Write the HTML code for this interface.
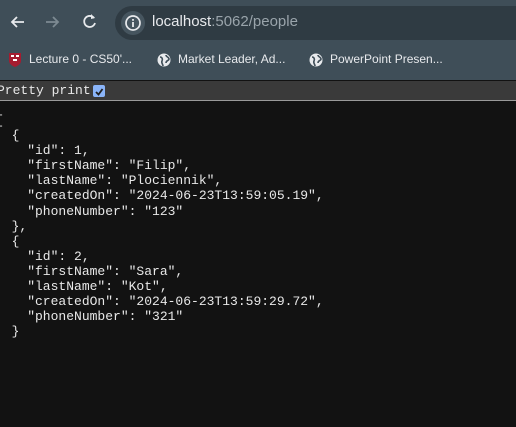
<!DOCTYPE html>
<html><head><style>
html,body{margin:0;padding:0;width:516px;height:427px;overflow:hidden;background:#121212;font-family:"Liberation Sans",sans-serif;}
.top{position:absolute;left:0;top:0;width:516px;height:80px;background:#3f4e58;}
.addr{position:absolute;left:115px;top:6px;width:420px;height:34px;border-radius:17px;background:#2f3b43;}
.info{position:absolute;left:121px;top:11px;width:24px;height:24px;border-radius:12px;background:#46555f;}
.url{position:absolute;left:152px;top:13px;font-size:15px;color:#e8eaed;}
.url span{color:#9aa4ab;}
.bm{position:absolute;top:52px;font-size:12px;color:#e8eaed;}
.pp{position:absolute;left:0;top:81px;width:516px;height:19px;background:#3a3a3a;border-bottom:1px solid #9a9a9a;}
.pp span{position:absolute;left:-3px;top:2px;font-family:"Liberation Mono",monospace;font-size:13px;color:#e8e8e8;}
.cb{position:absolute;left:93px;top:85px;width:12px;height:12px;border-radius:2px;background:#8ab4f8;}
pre{position:absolute;left:-4px;top:113px;margin:0;font-family:"Liberation Mono",monospace;font-size:13px;line-height:15.1px;color:#e8e8e8;}
</style></head><body>
<div class="top">
<svg style="position:absolute;left:0;top:0" width="110" height="44">
<path d="M24 22h-12M17 17l-5 5 5 5" stroke="#e8eaed" stroke-width="1.8" fill="none"/>
<path d="M46 22h12M53 17l5 5-5 5" stroke="#7d8a92" stroke-width="1.8" fill="none"/>
<path d="M94 18a5.5 5.5 0 1 0 1 5" stroke="#e8eaed" stroke-width="1.8" fill="none"/><path d="M91 14l4 4-4 1z" fill="#e8eaed"/>
</svg>
<div class="addr"></div><div class="info"></div>
<svg style="position:absolute;left:124px;top:14px" width="18" height="18"><circle cx="9" cy="9" r="7" stroke="#e8eaed" stroke-width="1.7" fill="none"/><rect x="8.1" y="8" width="1.8" height="5" fill="#e8eaed"/><rect x="8.1" y="5" width="1.8" height="1.8" fill="#e8eaed"/></svg>
<div class="url">localhost<span>:5062/people</span></div>
<svg style="position:absolute;left:8px;top:52px" width="14" height="16"><path d="M1 1h12v8c0 4-6 6-6 6s-6-2-6-6z" fill="#a51c30"/><rect x="3" y="3" width="3" height="2" fill="#fff"/><rect x="8" y="3" width="3" height="2" fill="#fff"/><rect x="5" y="7" width="4" height="2" fill="#fff"/></svg>
<div class="bm" style="left:29px">Lecture 0 - CS50'...</div>
<svg style="position:absolute;left:157px;top:53px" width="14" height="14"><circle cx="7" cy="7" r="6.5" fill="#e8eaed"/><path d="M3 4c2 0 3 2 2 4s1 3 1 5M9 2c0 2 3 2 3 4s-3 1-3 4" stroke="#3f4e58" stroke-width="1.6" fill="none"/></svg>
<div class="bm" style="left:178px">Market Leader, Ad...</div>
<svg style="position:absolute;left:309px;top:53px" width="14" height="14"><circle cx="7" cy="7" r="6.5" fill="#e8eaed"/><path d="M3 4c2 0 3 2 2 4s1 3 1 5M9 2c0 2 3 2 3 4s-3 1-3 4" stroke="#3f4e58" stroke-width="1.6" fill="none"/></svg>
<div class="bm" style="left:330px">PowerPoint Presen...</div>
</div>
<div class="pp"><span>Pretty print</span></div>
<div class="cb"><svg width="12" height="12"><path d="M3 6l2.5 2.5L9.5 3" stroke="#1f1f1f" stroke-width="1.8" fill="none"/></svg></div>
<pre>[
  {
    "id": 1,
    "firstName": "Filip",
    "lastName": "Plociennik",
    "createdOn": "2024-06-23T13:59:05.19",
    "phoneNumber": "123"
  },
  {
    "id": 2,
    "firstName": "Sara",
    "lastName": "Kot",
    "createdOn": "2024-06-23T13:59:29.72",
    "phoneNumber": "321"
  }</pre>
</body></html>
